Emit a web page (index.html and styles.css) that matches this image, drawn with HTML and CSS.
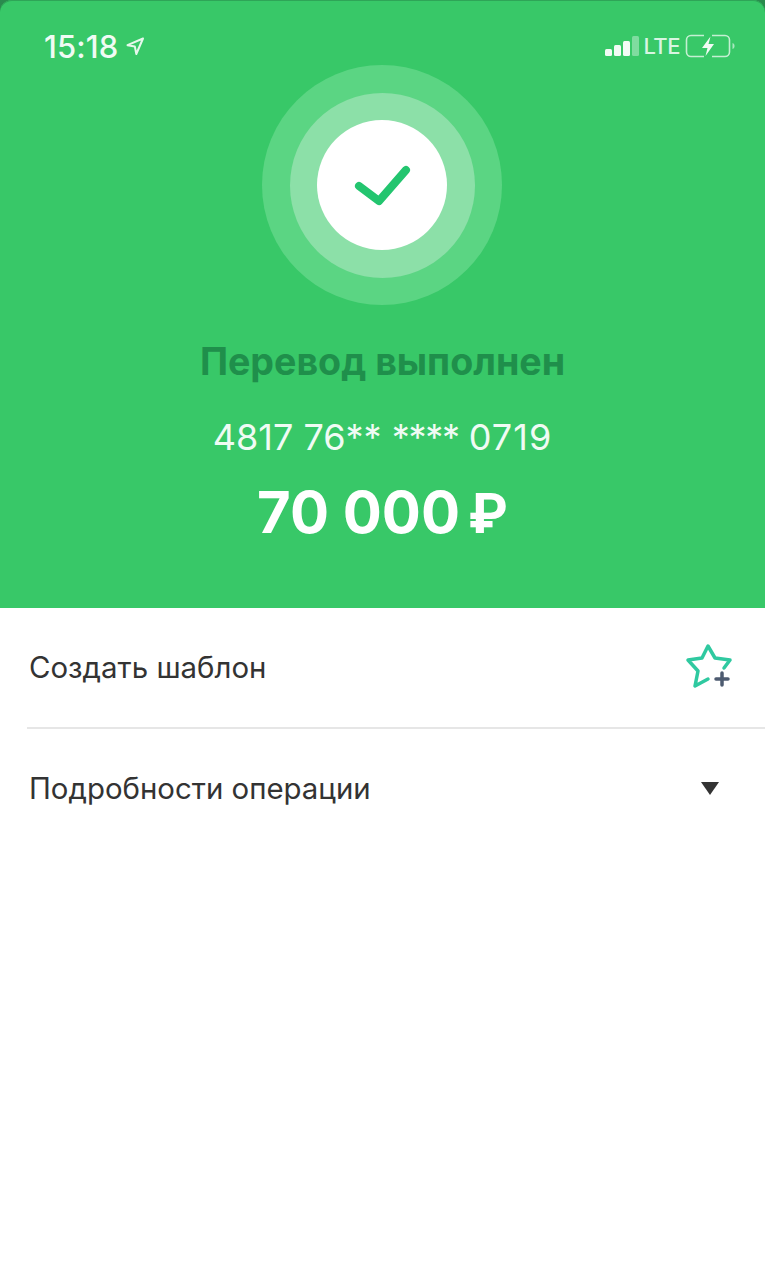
FILE: index.html
```html
<!DOCTYPE html>
<html lang="ru">
<head>
<meta charset="utf-8">
<title>Перевод выполнен</title>
<link rel="stylesheet" href="styles.css">
</head>
<body>
<main class="screen">
  <section class="hero">
    <div class="status">
      <div class="status-left">
        <span class="time">15:18</span>
        <svg class="arrow" width="20" height="20" viewBox="0 0 20 20"><path d="M18 2.500 2.500 9.200l7.300 1.200 1.500 7.600z" fill="none" stroke="#e6f8ec" stroke-width="2" stroke-linejoin="round"/></svg>
      </div>
      <div class="status-right">
        <svg width="34" height="22" viewBox="0 0 34 22"><rect x="0" y="14" width="7" height="7" rx="1.500" fill="#f2fbf5"/><rect x="9" y="10" width="7" height="11" rx="1.500" fill="#f2fbf5"/><rect x="18" y="6" width="7" height="15" rx="1.500" fill="#f2fbf5"/><rect x="27" y="1" width="7" height="20" rx="1.500" fill="#7fdc9f"/></svg>
        <span class="lte">LTE</span>
        <svg width="50" height="24" viewBox="0 0 50 24"><path d="M19 1.500H6a4.500 4.500 0 0 0-4.500 4.500v12A4.500 4.500 0 0 0 6 22.500h13M27 22.500h13a4.500 4.500 0 0 0 4.500-4.500V6A4.500 4.500 0 0 0 40 1.500H27" fill="none" stroke="#c4efd2" stroke-width="1.600"/><path d="M25.500 2.500 17 14h5.500L20.500 22 29 10h-5.500z" fill="#f2fbf5"/><path d="M47.500 9c1.600.6 2 1.600 2 3s-.4 2.400-2 3z" fill="#a9e8bf"/></svg>
      </div>
    </div>
    <div class="rings">
      <div class="ring-mid">
        <div class="ring-core">
          <svg width="58" height="44" viewBox="0 0 58 44"><path d="M6 23 26 38 53 7" fill="none" stroke="#23c56f" stroke-width="8" stroke-linecap="round" stroke-linejoin="round"/></svg>
        </div>
      </div>
    </div>
    <h1 class="title">Перевод выполнен</h1>
    <p class="card">4817 76** <span class="stars">****</span> <span class="tail">0719</span></p>
    <p class="amount">70 000<span class="rub">₽</span></p>
  </section>
  <section class="list">
    <div class="row">
      <span class="label">Создать шаблон</span>
      <svg class="star" width="48" height="46" viewBox="0 0 48 46"><path d="M23 36 10 43 13 28 3 17 17 15 23 3 30 15 45 17 39 25" fill="none" stroke="#2fc9a0" stroke-width="3.500" stroke-linecap="round" stroke-linejoin="round"/><path d="M37 30V42M31 36H43" fill="none" stroke="#4d5b70" stroke-width="3.500" stroke-linecap="round"/></svg>
    </div>
    <div class="row divided">
      <span class="label">Подробности операции</span>
      <svg class="caret" width="18" height="13" viewBox="0 0 18 13"><path d="M0 0H18L9 13z" fill="#333"/></svg>
    </div>
  </section>
</main>
</body>
</html>
```

FILE: styles.css
```css
* { box-sizing: border-box; }
html, body { margin: 0; background: #fff; }
.screen {
  width: 765px;
  height: 1280px;
  overflow: hidden;
  background: #2a8a4e;
  font-family: Inter, "Noto Sans", "Liberation Sans", sans-serif;
}
.hero {
  height: 608px;
  background: #38c868;
  border-radius: 12px 12px 0 0;
  box-shadow: inset 0 1px 0 #2ea557;
  display: flex;
  flex-direction: column;
  align-items: center;
  color: #fff;
}
.status {
  width: 100%;
  height: 65px;
  padding: 28px 30px 0 44px;
  display: flex;
  justify-content: space-between;
  align-items: flex-start;
}
.status-left, .status-right { display: flex; align-items: center; height: 36px; }
.time { font-size: 31px; font-weight: 500; color: #f0fbf4; letter-spacing: 0.1px; }
.arrow { margin-left: 7px; }
.status-right { gap: 5px; }
.lte { font-size: 22px; font-weight: 500; color: #d8f5e2; letter-spacing: -0.5px; }
.rings {
  width: 240px;
  height: 240px;
  margin-right: 1px;
  border-radius: 50%;
  background: #5bd583;
  display: flex;
  align-items: center;
  justify-content: center;
}
.ring-mid {
  width: 185px;
  height: 185px;
  border-radius: 50%;
  background: #8ce0a8;
  display: flex;
  align-items: center;
  justify-content: center;
}
.ring-core {
  width: 130px;
  height: 130px;
  border-radius: 50%;
  background: #fff;
  display: flex;
  align-items: center;
  justify-content: center;
}
.title {
  margin: 35px 0 0;
  font-size: 37.6px;
  line-height: 44px;
  font-weight: 700;
  color: #1f8f4b;
}
.card {
  margin: 31px 0 0;
  font-size: 36px;
  line-height: 44px;
  font-weight: 400;
  color: #f0fbf4;
}
.stars { letter-spacing: -1.3px; }
.tail { letter-spacing: 1px; }
.amount {
  margin: 19px 0 0;
  font-size: 58px;
  line-height: 68px;
  font-weight: 700;
  display: flex;
  align-items: baseline;
}
.rub { font-family: Roboto, Inter, sans-serif; font-size: 55px; margin-left: 9px; }
.list { background: #fff; height: 672px; }
.row {
  height: 119px;
  padding: 0 32px 0 29px;
  display: flex;
  align-items: center;
  justify-content: space-between;
}
.divided {
  height: 120px;
  margin-left: 27px;
  padding-left: 2px;
  border-top: 2px solid #e6e6e6;
}
.label { font-size: 29.4px; color: #333; }
.star { margin-bottom: 4px; }
.caret { margin-right: 14px; }
```
